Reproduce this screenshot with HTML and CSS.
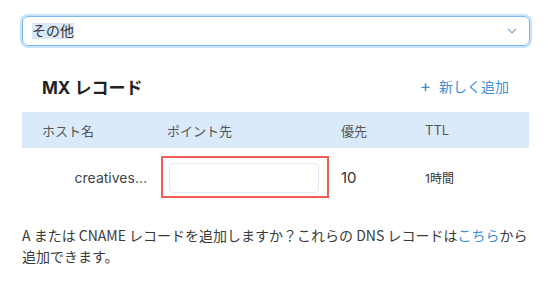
FILE: index.html
```html
<!DOCTYPE html>
<html lang="ja">
<head>
    <meta charset="UTF-8">
    <meta name="viewport" content="width=device-width, initial-scale=1.0">
    <title>MX レコード</title>
    <link rel="stylesheet" href="styles.css">
</head>
<body>
    <div class="panel">
        <div class="select-box">
            <span class="select-value">その他</span>
            <svg class="chevron" width="10" height="6" viewBox="0 0 10 6">
                <path d="M1 1 L5 5 L9 1" fill="none" stroke="#7fa6c8" stroke-width="1.2"/>
            </svg>
        </div>

        <div class="section-head">
            <h2>MX レコード</h2>
            <a href="#" class="add-link"><span class="plus">+</span> 新しく追加</a>
        </div>

        <div class="records">
            <div class="rec-row rec-head">
                <div>ホスト名</div>
                <div>ポイント先</div>
                <div>優先</div>
                <div>TTL</div>
            </div>
            <div class="rec-row rec-body">
                <div class="host">creatives…</div>
                <div>
                    <div class="highlight">
                        <input type="text" class="point-input">
                    </div>
                </div>
                <div class="priority">10</div>
                <div class="ttl">1時間</div>
            </div>
        </div>

        <p class="note">A または CNAME レコードを追加しますか？これらの DNS レコードは<a href="#">こちら</a>から追加できます。</p>
    </div>
</body>
</html>
```

FILE: styles.css
```css
body {
    margin: 0;
    background: #fff;
    font-family: "Inter", "Noto Sans CJK JP", sans-serif;
    color: #333;
}

.panel {
    width: 508px;
    padding: 16px 0 0 22px;
}

.select-box {
    display: flex;
    align-items: center;
    justify-content: space-between;
    height: 28px;
    padding: 0 12px 0 9px;
    border: 1px solid #7db9ee;
    border-radius: 6px;
    box-shadow: 0 0 0 2px #c9e3fa;
}

.select-value {
    font-size: 14px;
    color: #333;
    background: #d9e9f9;
    line-height: 16px;
}

.section-head {
    display: flex;
    align-items: center;
    justify-content: space-between;
    padding: 0 21px 0 20px;
    margin-top: 28px;
    height: 24px;
}

.section-head h2 {
    margin: 0;
    font-size: 17px;
    font-weight: 700;
    color: #222;
}

.add-link {
    color: #3f8fd8;
    text-decoration: none;
    font-size: 14px;
}

.add-link .plus {
    font-size: 17px;
    margin-right: 4px;
}

.records {
    margin-top: 14px;
    width: 507px;
}

.rec-row {
    display: grid;
    grid-template-columns: 125px 174px 84px 1fr;
    align-items: center;
    padding-left: 20px;
}

.rec-head {
    height: 36px;
    background: #dbeafa;
    font-size: 13px;
    color: #555;
}

.rec-body {
    padding-top: 8px;
    height: 42px;
}

.host {
    text-align: right;
    padding-right: 20px;
    font-size: 14px;
    color: #444;
}

.highlight {
    display: inline-block;
    margin-left: -6px;
    border: 2px solid #ef5e55;
    padding: 5px 8px 3px 6px;
}

.point-input {
    display: block;
    box-sizing: border-box;
    width: 150px;
    height: 30px;
    border: 1px solid #e2ecf6;
    border-radius: 4px;
}

.priority {
    font-size: 15px;
}

.ttl {
    font-size: 12px;
}

.note {
    margin: 27px 0 0;
    font-family: "Noto Sans CJK JP", sans-serif;
    font-size: 14px;
    line-height: 21px;
    color: #3a3a3a;
}

.note a {
    color: #3f8fd8;
    text-decoration: none;
}
```
